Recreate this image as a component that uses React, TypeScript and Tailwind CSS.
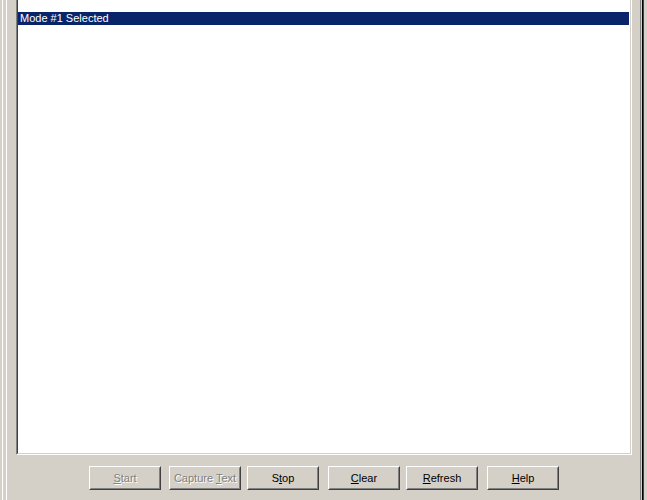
import React from "react";

const font = { fontFamily: '"Liberation Sans", Arial, sans-serif' };

function Btn({
  label,
  ul,
  disabled,
  className,
}: {
  label: string;
  ul: number;
  disabled?: boolean;
  className: string;
}) {
  const before = label.slice(0, ul);
  const ch = label.slice(ul, ul + 1);
  const after = label.slice(ul + 1);
  return (
    <div
      className={`h-[24px] w-[72px] shrink-0 border border-t-white border-l-white border-r-[#404040] border-b-[#404040] ${className}`}
    >
      <div className="flex h-full w-full items-center justify-center border border-t-[#d4d0c8] border-l-[#d4d0c8] border-r-[#808080] border-b-[#808080] bg-[#d4d0c8]">
        <span
          className={`pt-px text-[11px] leading-[13px] ${
            disabled ? "text-[#808080] [text-shadow:1px_1px_0_#ffffff]" : "text-black"
          }`}
        >
          {before}
          <span className="underline underline-offset-[1px]">{ch}</span>
          {after}
        </span>
      </div>
    </div>
  );
}

export default function App() {
  return (
    <div className="flex h-[500px] w-[647px] overflow-hidden bg-[#d4d0c8]" style={font}>
      {/* left frame */}
      <div className="flex w-[16px] shrink-0">
        <div className="ml-[2px] w-px bg-white" />
        <div className="ml-[3px] w-px bg-white" />
      </div>

      {/* main column */}
      <div className="flex w-[616px] shrink-0 flex-col">
        <div className="h-[455px] border-b border-l border-r border-b-white border-l-[#808080] border-r-white">
          <div className="h-full border-b border-l border-r border-b-[#d4d0c8] border-l-[#404040] border-r-[#d4d0c8] bg-white pt-[12px]">
            <div className="mr-px h-[13px] bg-[#0a246a] pl-[2px] text-[11px] leading-[13px] text-white">
              Mode #1 Selected
            </div>
          </div>
        </div>
        <div className="mt-[11px] flex">
          <Btn label="Start" ul={0} disabled className="ml-[73px]" />
          <Btn label="Capture Text" ul={8} disabled className="ml-[8px]" />
          <Btn label="Stop" ul={1} className="ml-[6px]" />
          <Btn label="Clear" ul={0} className="ml-[9px]" />
          <Btn label="Refresh" ul={0} className="ml-[6px]" />
          <Btn label="Help" ul={0} className="ml-[9px]" />
        </div>
      </div>

      {/* right gap */}
      <div className="w-[8px] shrink-0" />

      {/* right frame */}
      <div className="flex w-[7px] shrink-0">
        <div className="w-px bg-[#808080]" />
        <div className="w-px bg-[#d4d0c8]" />
        <div className="w-px bg-black" />
        <div className="w-px bg-[#404040]" />
      </div>
    </div>
  );
}
